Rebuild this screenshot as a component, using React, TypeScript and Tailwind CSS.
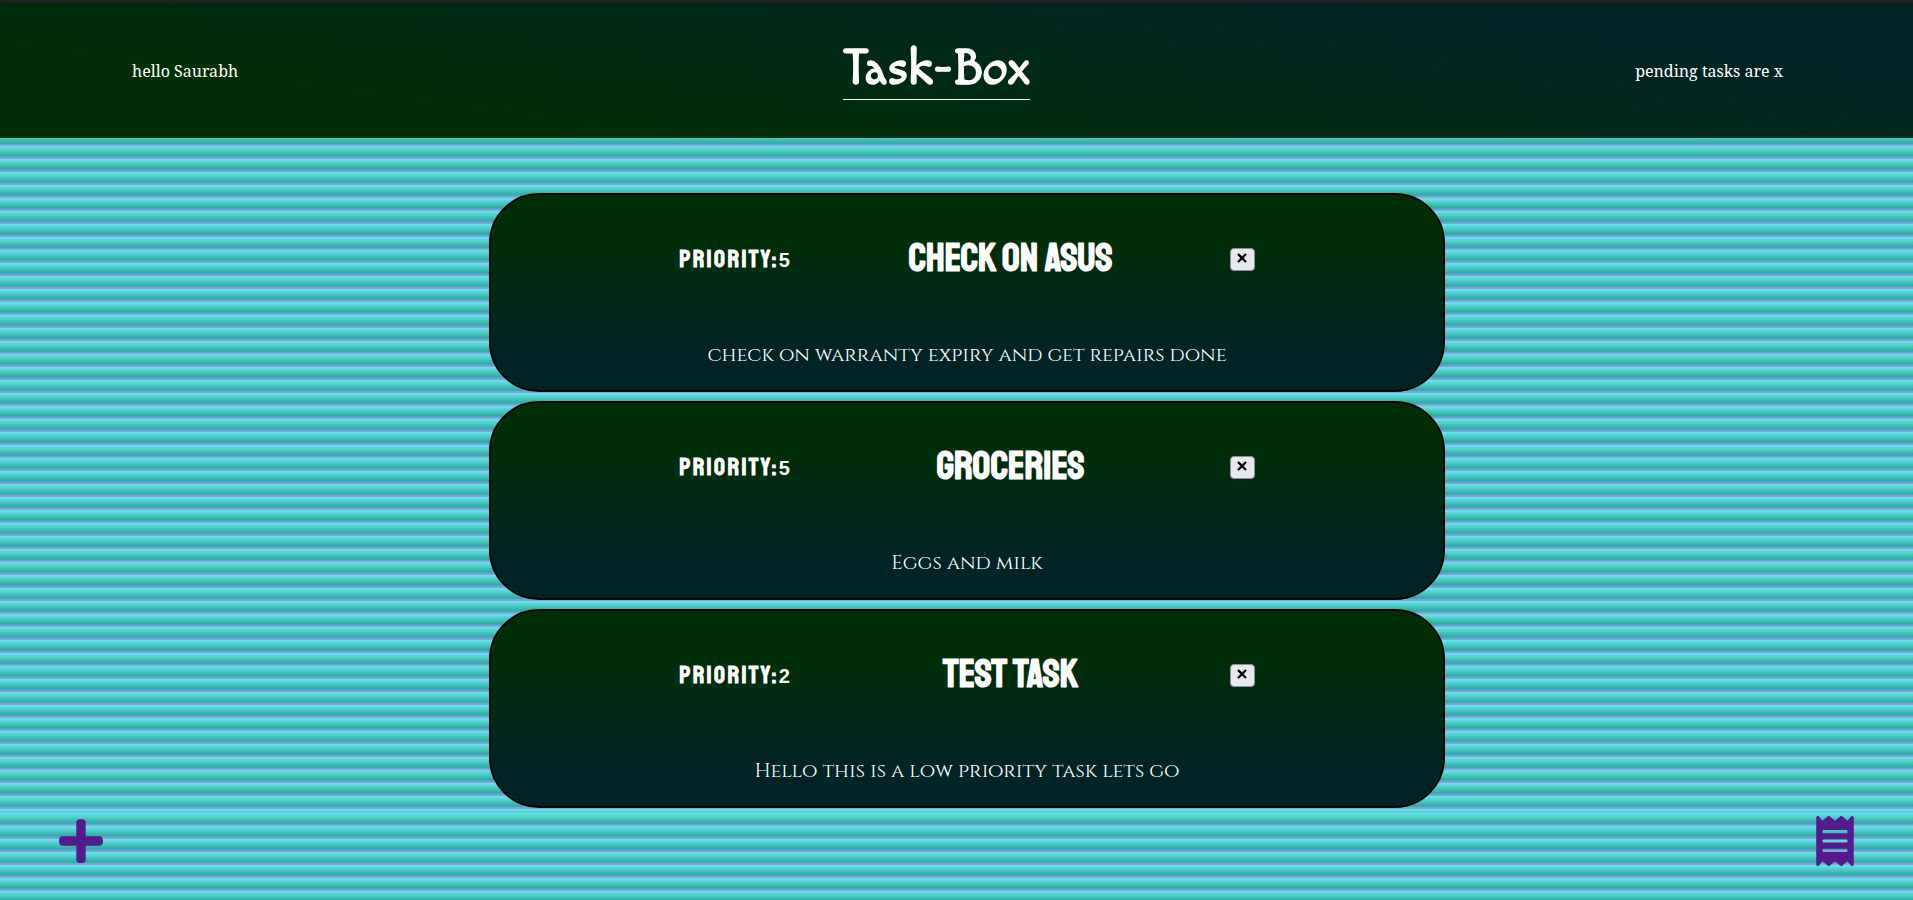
import { FaPlus, FaReceipt } from "react-icons/fa";

type Task = { priority: number; title: string; note: string };

const tasks: Task[] = [
  { priority: 5, title: "CHECK ON ASUS", note: "check on warranty expiry and get repairs done" },
  { priority: 5, title: "GROCERIES", note: "Eggs and milk" },
  { priority: 2, title: "TEST TASK", note: "Hello this is a low priority task lets go" },
];

function Header() {
  return (
    <header className="flex h-[135px] items-center justify-between bg-linear-[8deg,#002f05_20%,#002326_85%] pr-[130px] pl-[132px] font-['Noto_Serif',serif] text-base text-white">
      <p>hello Saurabh</p>
      <h1 className="border-b border-white pb-px font-['Macondo',cursive] text-[50px] leading-[56px] font-bold">
        Task-Box
      </h1>
      <p>pending tasks are x</p>
    </header>
  );
}

function TaskCard({ priority, title, note }: Task) {
  return (
    <li className="flex h-[199px] flex-col items-center rounded-[50px] border-2 border-black bg-linear-[180deg,#002f05_20%,#002326_85%] text-white">
      <div className="grid h-32 w-full grid-cols-[112px_1fr_25px] items-center px-[188px]">
        <p className="font-['Staatliches',sans-serif] text-2xl font-bold tracking-widest whitespace-nowrap">
          PRIORITY:<span className="font-['Liberation_Sans',sans-serif] text-xl">{priority}</span>
        </p>
        <h2 className="text-center font-['Staatliches',sans-serif] text-[39px] font-bold whitespace-nowrap">
          {title}
        </h2>
        <button
          type="button"
          aria-label={`Remove ${title}`}
          className="flex h-[23px] w-[25px] items-start justify-center rounded-[4px] border border-[#8f8f9d] bg-[#e9e9ed] pt-1 text-black"
        >
          <svg viewBox="0 0 10 10" className="size-[10px]" fill="none" stroke="currentColor" strokeWidth="2.4">
            <path d="M1 1L9 9M9 1L1 9" />
          </svg>
        </button>
      </div>
      <p className="mt-4 font-['Cinzel',serif] text-xl leading-8">{note}</p>
    </li>
  );
}

export default function App() {
  return (
    <div className="min-h-screen border-t-[3px] border-[#222222] bg-[repeating-linear-gradient(to_bottom,#6ae5ec_0px,#2bac9f_10px,#5ca5cc_11px,#82a5e6_12px,#82a5e6_13px)] bg-[length:100%_810px]">
      <Header />
      <main className="flex justify-center pt-[55px] pb-[91px] pl-[21px]">
        <ul className="flex w-[50.5%] flex-col gap-[9px]">
          {tasks.map((task) => (
            <TaskCard key={task.title} {...task} />
          ))}
        </ul>
      </main>
      <nav className="pointer-events-none fixed inset-x-0 bottom-[34px] flex items-center justify-between pr-[53px] pl-[56px] text-[#551a8b]">
        <a href="#add" aria-label="Add task" className="pointer-events-auto">
          <FaPlus className="size-[50px]" />
        </a>
        <a href="#list" aria-label="Task list" className="pointer-events-auto">
          <FaReceipt className="size-[50px]" />
        </a>
      </nav>
    </div>
  );
}
